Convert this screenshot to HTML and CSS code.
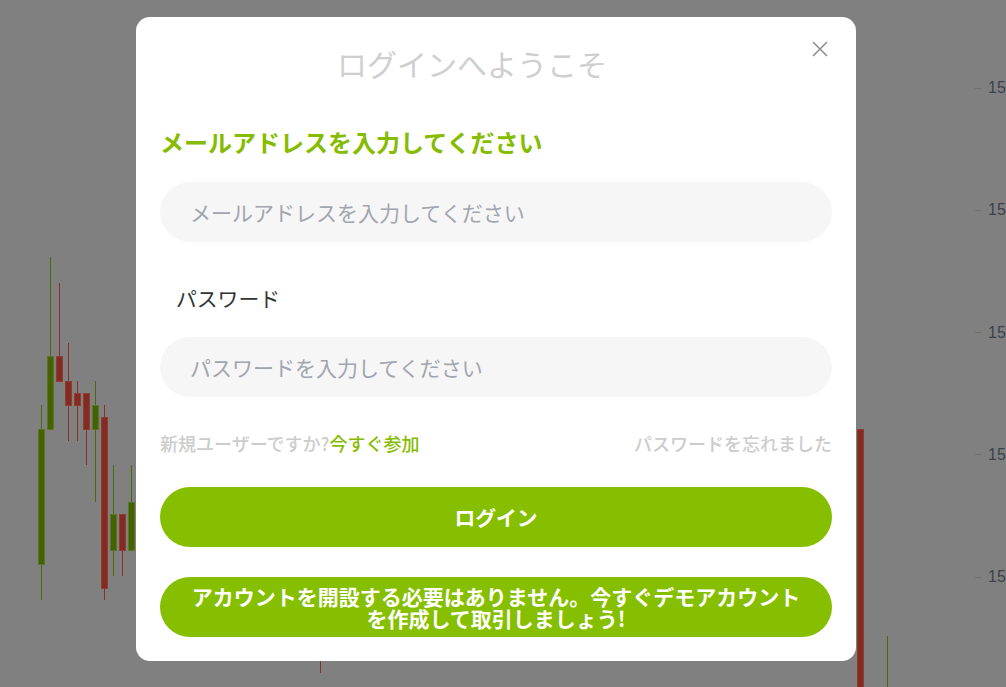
FILE: index.html
```html
<!DOCTYPE html>
<html lang="ja">
<head>
    <meta charset="UTF-8">
    <meta name="viewport" content="width=device-width, initial-scale=1.0">
    <title>ログイン</title>
    <link rel="stylesheet" href="styles.css">
</head>
<body>
    <!-- price chart behind the dialog -->
    <div class="chart">
        <svg class="candles" width="1006" height="687" viewBox="0 0 1006 687">
            <g class="wick-up">
                <line x1="41.5" y1="405" x2="41.5" y2="600"/>
                <line x1="50.5" y1="257" x2="50.5" y2="356"/>
                <line x1="95.5" y1="381" x2="95.5" y2="502"/>
                <line x1="113.5" y1="465" x2="113.5" y2="576"/>
                <line x1="131.5" y1="465" x2="131.5" y2="550"/>
                <line x1="887.5" y1="636" x2="887.5" y2="687"/>
            </g>
            <g class="wick-down">
                <line x1="59.5" y1="283" x2="59.5" y2="356"/>
                <line x1="68.5" y1="343" x2="68.5" y2="441"/>
                <line x1="77.5" y1="381" x2="77.5" y2="441"/>
                <line x1="86.5" y1="393" x2="86.5" y2="465"/>
                <line x1="104.5" y1="405" x2="104.5" y2="600"/>
                <line x1="122.5" y1="514" x2="122.5" y2="576"/>
                <line x1="320.5" y1="655" x2="320.5" y2="673"/>
            </g>
            <g class="body-up">
                <rect x="38.5" y="429.5" width="6" height="135"/>
                <rect x="47.5" y="356.5" width="6" height="73"/>
                <rect x="92.5" y="405.5" width="6" height="24"/>
                <rect x="110.5" y="514.5" width="6" height="36"/>
                <rect x="128.5" y="502.5" width="6" height="48"/>
            </g>
            <g class="body-down">
                <rect x="56.5" y="356.5" width="6" height="25"/>
                <rect x="65.5" y="381.5" width="6" height="24"/>
                <rect x="74.5" y="393.5" width="6" height="12"/>
                <rect x="83.5" y="393.5" width="6" height="36"/>
                <rect x="101.5" y="417.5" width="6" height="171"/>
                <rect x="119.5" y="514.5" width="6" height="36"/>
                <rect x="857.5" y="429.5" width="6" height="270"/>
            </g>
        </svg>
        <ul class="price-axis">
            <li>1528.40</li>
            <li>1526.20</li>
            <li>1524.00</li>
            <li>1521.80</li>
            <li>1519.60</li>
        </ul>
    </div>

    <div class="modal">
        <div class="modal-header">
            <h2 class="modal-title">ログインへようこそ</h2>
            <button class="close-btn" type="button" aria-label="閉じる">
                <svg width="16" height="16" viewBox="0 0 16 16">
                    <path d="M1 1 L15 15 M15 1 L1 15" stroke="#8c8c8c" stroke-width="1.5" fill="none"/>
                </svg>
            </button>
        </div>

        <form class="login-form">
            <label class="email-label" for="email">メールアドレスを入力してください</label>
            <input class="field" type="email" id="email" placeholder="メールアドレスを入力してください">

            <label class="password-label" for="password">パスワード</label>
            <input class="field" type="password" id="password" placeholder="パスワードを入力してください">

            <div class="form-links">
                <span class="signup">新規ユーザーですか?<a href="#">今すぐ参加</a></span>
                <a class="forgot" href="#">パスワードを忘れました</a>
            </div>

            <button type="submit" class="btn btn-login">ログイン</button>
            <button type="button" class="btn btn-demo">アカウントを開設する必要はありません。今すぐデモアカウント<br>を作成して取引しましょう!</button>
        </form>
    </div>
</body>
</html>
```

FILE: styles.css
```css
* {
    margin: 0;
    padding: 0;
    box-sizing: border-box;
}

body {
    font-family: "Noto Sans CJK JP", "Noto Sans", sans-serif;
    width: 1006px;
    height: 687px;
    overflow: hidden;
    background: #808080;
}

/* dimmed chart */
.chart {
    position: relative;
    width: 100%;
    height: 100%;
}

.candles {
    position: absolute;
    left: 0;
    top: 0;
}

.wick-up line {
    stroke: #4b6a05;
    stroke-width: 1;
}

.wick-down line {
    stroke: #8a2d23;
    stroke-width: 1;
}

.body-up rect {
    fill: #456200;
    stroke: #5a7428;
    stroke-width: 1;
}

.body-down rect {
    fill: #832b21;
    stroke: #8f3c33;
    stroke-width: 1;
}

.price-axis {
    position: absolute;
    left: 975px;
    top: 76px;
    list-style: none;
    font-family: "Liberation Sans", Arial, sans-serif;
    font-size: 16px;
    color: #3c414b;
    white-space: nowrap;
}

.price-axis li {
    display: flex;
    align-items: center;
    gap: 7px;
    height: 24px;
    margin-bottom: 98.25px;
}

.price-axis li::before {
    content: "";
    width: 6px;
    height: 1px;
    background: #707070;
}

/* dialog */
.modal {
    position: absolute;
    left: 136px;
    top: 17px;
    width: 720px;
    height: 644px;
    background: #fff;
    border-radius: 14px;
    padding: 24px;
}

.modal-header {
    display: flex;
    align-items: flex-start;
}

.modal-title {
    flex: 1;
    text-align: center;
    font-size: 30px;
    font-weight: 400;
    line-height: 45px;
    color: #cfcfcf;
}

.close-btn {
    width: 48px;
    height: 16px;
    display: flex;
    justify-content: flex-end;
    padding-right: 4px;
    border: none;
    background: none;
    cursor: pointer;
}

.login-form {
    display: flex;
    flex-direction: column;
}

.email-label {
    margin-top: 38px;
    font-size: 24px;
    font-weight: 700;
    line-height: 36px;
    color: #86bc00;
}

.field {
    height: 60px;
    border: none;
    border-radius: 30px;
    background: #f6f6f6;
    padding: 0 30px;
    font-family: inherit;
    font-size: 21px;
    color: #333;
    outline: none;
}

.field::placeholder {
    color: #a1a5ae;
}

.email-label + .field {
    margin-top: 22px;
}

.password-label {
    margin-top: 41px;
    padding-left: 16px;
    font-size: 20.8px;
    line-height: 30px;
    color: #333;
}

.password-label + .field {
    margin-top: 24px;
}

.form-links {
    display: flex;
    justify-content: space-between;
    margin-top: 32px;
    font-size: 18px;
    font-weight: 500;
    line-height: 28px;
    color: #cccccc;
}

.form-links a {
    text-decoration: none;
    color: #cccccc;
}

.signup a {
    color: #86bc00;
}

.btn {
    height: 60px;
    border: none;
    border-radius: 30px;
    background: #86bf00;
    color: #fff;
    font-family: inherit;
    font-size: 20.8px;
    font-weight: 700;
    cursor: pointer;
}

.btn-login {
    margin-top: 30px;
}

.btn-demo {
    margin-top: 30px;
    font-size: 21px;
    line-height: 22px;
}
```
